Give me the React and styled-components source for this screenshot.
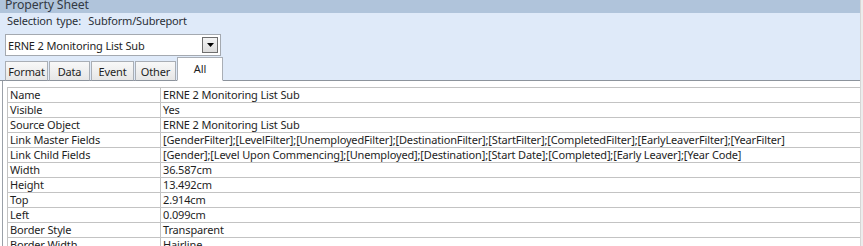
import React from 'react';
import styled, { createGlobalStyle } from 'styled-components';

const GlobalStyle = createGlobalStyle`
  html, body {
    margin: 0;
    padding: 0;
    background: #ffffff;
    overflow: hidden;
  }
  body {
    font-family: "Noto Sans", "Open Sans", sans-serif;
    font-size: 11px;
    letter-spacing: -0.15px;
    color: #1e1e1e;
  }
`;

const rows = [
  ['Name', 'ERNE 2 Monitoring List Sub'],
  ['Visible', 'Yes'],
  ['Source Object', 'ERNE 2 Monitoring List Sub'],
  ['Link Master Fields', '[GenderFilter];[LevelFilter];[UnemployedFilter];[DestinationFilter];[StartFilter];[CompletedFilter];[EarlyLeaverFilter];[YearFilter]'],
  ['Link Child Fields', '[Gender];[Level Upon Commencing];[Unemployed];[Destination];[Start Date];[Completed];[Early Leaver];[Year Code]'],
  ['Width', '36.587cm'],
  ['Height', '13.492cm'],
  ['Top', '2.914cm'],
  ['Left', '0.099cm'],
  ['Border Style', 'Transparent'],
  ['Border Width', 'Hairline'],
];

// tab label and its pixel width
const tabs = [
  ['Format', 43],
  ['Data', 41],
  ['Event', 43],
  ['Other', 41],
  ['All', 46],
];

const Window = styled.div`
  display: flex;
  width: 863px;
  height: 246px;
  overflow: hidden;
`;

const Sheet = styled.div`
  flex: 1;
  display: flex;
  flex-direction: column;
  min-width: 0;
`;

const Edge = styled.div`
  width: 2px;
  flex-shrink: 0;
  background: #ececec;
  border-left: 1px solid #d6d6d6;
`;

const TitleBar = styled.div`
  flex-shrink: 0;
  height: 13px;
  background: #b0c4db;
  color: #333a44;
  font-size: 12.3px;
  line-height: 10px;
  padding-left: 5px;
  overflow: hidden;
`;

const Header = styled.div`
  flex-shrink: 0;
  height: 67px;
  background: #dfeaf9;
  border-bottom: 1px solid #8c939c;
  display: flex;
  flex-direction: column;
  padding-left: 5px;
`;

const SelectionType = styled.div`
  height: 21px;
  line-height: 16px;
  padding-left: 2px;
  color: #2a2f36;
  word-spacing: 1px;
`;

const Combo = styled.div`
  width: 216px;
  height: 22px;
  background: #ffffff;
  border: 1px solid #a4a9b0;
  display: flex;
  align-items: center;
  justify-content: space-between;
  padding-left: 2px;
  box-sizing: border-box;
`;

const ComboButton = styled.div`
  width: 16px;
  height: 16px;
  margin-right: 2px;
  box-sizing: border-box;
  border: 1px solid #6e6e6e;
  background: linear-gradient(#f4f4f4, #dcdcdc);
  display: flex;
  align-items: center;
  justify-content: center;
`;

const TabStrip = styled.div`
  display: flex;
  align-items: flex-end;
  margin-top: auto;
  margin-bottom: -1px;
`;

const Tab = styled.div`
  width: ${p => p.$w}px;
  height: ${p => (p.$active ? '24px' : '20px')};
  box-sizing: border-box;
  border: 1px solid #a9aeb5;
  border-bottom: ${p => (p.$active ? '1px solid #ffffff' : '1px solid #8c939c')};
  margin-right: ${p => (p.$active ? '0' : '1px')};
  background: ${p => (p.$active ? '#ffffff' : 'linear-gradient(#f8f8f8, #e6e6e6)')};
  line-height: ${p => (p.$active ? '21px' : '20px')};
  text-align: center;
  color: #1e1e1e;
`;

const Body = styled.div`
  flex: 1;
  min-height: 0;
  overflow: hidden;
  background: #ffffff;
  border-left: 1px solid #9aa0a8;
  margin-left: 2px;
  padding: 6px 0 0 4px;
`;

const Grid = styled.div`
  border-top: 1px solid #c3c3c3;
  border-left: 1px solid #c3c3c3;
  display: grid;
  grid-template-columns: 152px 1fr;
`;

const Cell = styled.div`
  height: 15px;
  line-height: 14px;
  border-bottom: 1px solid #c3c3c3;
  border-left: ${p => (p.$value ? '1px solid #c3c3c3' : 'none')};
  padding-left: 2px;
  white-space: nowrap;
  overflow: hidden;
  box-sizing: border-box;
`;

export default function App() {
  return (
    <>
      <GlobalStyle />
      <Window>
        <Sheet>
          <TitleBar>Property Sheet</TitleBar>
          <Header>
            <SelectionType>Selection type:&nbsp; Subform/Subreport</SelectionType>
            <Combo>
              <span>ERNE 2 Monitoring List Sub</span>
              <ComboButton>
                <svg width="7" height="4" viewBox="0 0 7 4">
                  <path d="M0 0h7L3.5 4z" fill="#000" />
                </svg>
              </ComboButton>
            </Combo>
            <TabStrip>
              {tabs.map(([t, w]) => (
                <Tab key={t} $w={w} $active={t === 'All'}>{t}</Tab>
              ))}
            </TabStrip>
          </Header>
          <Body>
            <Grid>
              {rows.map(([k, v]) => (
                <React.Fragment key={k}>
                  <Cell>{k}</Cell>
                  <Cell $value>{v}</Cell>
                </React.Fragment>
              ))}
            </Grid>
          </Body>
        </Sheet>
        <Edge />
      </Window>
    </>
  );
}
